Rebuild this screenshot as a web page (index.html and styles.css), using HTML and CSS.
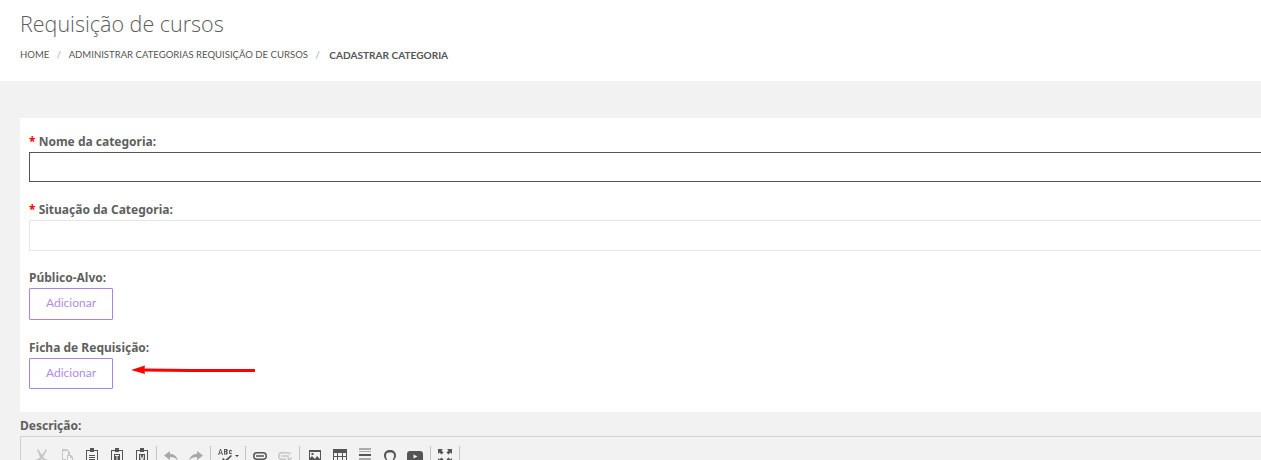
FILE: index.html
```html
<!DOCTYPE html>
<html lang="pt-BR">
<head>
    <meta charset="UTF-8">
    <title>Requisição de cursos</title>
    <link rel="stylesheet" href="styles.css">
</head>
<body>
    <div class="cabecalho">
        <h1 class="titulo">Requisição de cursos</h1>
        <div class="breadcrumb">
            <a>HOME</a><span class="sep">/</span>
            <a>ADMINISTRAR CATEGORIAS REQUISIÇÃO DE CURSOS</a><span class="sep">/</span>
            <strong>CADASTRAR CATEGORIA</strong>
        </div>
    </div>

    <div class="conteudo">
        <form class="painel">
            <div class="campo">
                <label><span class="obrigatorio">*</span> Nome da categoria:</label>
                <div class="input input-foco"></div>
            </div>
            <div class="campo campo-situacao">
                <label><span class="obrigatorio">*</span> Situação da Categoria:</label>
                <div class="input"></div>
            </div>
            <div class="campo">
                <label>Público-Alvo:</label>
                <button type="button" class="botao">Adicionar</button>
            </div>
            <div class="campo campo-seta">
                <label>Ficha de Requisição:</label>
                <button type="button" class="botao">Adicionar</button>
                <svg class="seta" width="126" height="12" viewBox="0 0 126 12">
                    <path d="M0 6 L14 1.500 L13.500 4.500 L60 5 L124 5 L124 8 L60 8 L13.500 7.500 L14 10 Z" fill="#f00"/>
                </svg>
            </div>
        </form>

        <div class="descricao">
            <label>Descrição:</label>
            <div class="editor">
                <div class="toolbar">
                    <div class="grupo">
                        <svg class="ico claro" viewBox="0 0 16 16"><path d="M4 1l4 6 4-6 1 1-4 7 2 2a2.500 2.500 0 1 1-2 2L8 10.500 6 13a2.500 2.500 0 1 1-2-2l2-2-3-7z"/></svg>
                        <svg class="ico claro" viewBox="0 0 16 16"><path d="M3 1h5l3 3v3H9V3H4v8h3v1H3zM8 7h4l2 2v6H8zM9 8v6h4V10h-2V8z"/></svg>
                        <svg class="ico" viewBox="0 0 16 16"><path d="M6 0h4v2h4v14H2V2h4zM3 3v12h10V3h-3v1H6V3zM5 7h6v1H5zM5 9h6v1H5zM5 11h6v1H5zM5 13h6v1H5z"/></svg>
                        <svg class="ico" viewBox="0 0 16 16"><path d="M6 0h4v2h4v14H2V2h4zM3 3v12h10V3h-3v1H6V3zM5 6h6v8H5zM6 7v1h1.500v5h1V8H10V7z"/></svg>
                        <svg class="ico" viewBox="0 0 16 16"><path d="M6 0h4v2h4v14H2V2h4zM3 3v12h10V3h-3v1H6V3zM5 6h6v8H5zM6 7l.7 6h1L8 10l.3 3h1l.7-6h-.8l-.4 3.500L8 8l-.8 2.500L6.800 7z"/></svg>
                    </div>
                    <div class="grupo">
                        <svg class="ico medio" viewBox="0 0 16 16"><path d="M7 3v3c4 0 7 2 8 7-2-3-4-4-8-4v3L1 7.500z"/></svg>
                        <svg class="ico medio" viewBox="0 0 16 16"><path d="M9 3v3c-4 0-7 2-8 7 2-3 4-4 8-4v3l6-4.500z"/></svg>
                    </div>
                    <div class="grupo grupo-abc">
                        <svg class="ico" viewBox="0 0 16 16"><path d="M1 7l2-6h1l2 6H5l-.4-1.500H2.400L2 7zM2.700 4.500h1.600L3.500 2zM7 1h2.500c1.500 0 1.500 2 .5 2.500 1.200.5 1 3-.5 3H7zM8 2v1h1V2zM8 4v1.500h1.200V4zM15 2.500l-.5 1C13.500 2.500 13 3 13 4s.5 1.500 1.500.5l.5 1c-2 1.500-3 .5-3-1.500s1.200-3 3-1.500zM5 11l1.500-1 1.500 2 6-5 1 1-7 7z"/></svg>
                        <span class="caret"></span>
                    </div>
                    <div class="grupo">
                        <svg class="ico" viewBox="0 0 16 16"><path d="M5 4h6a4 4 0 0 1 0 8H5a4 4 0 0 1 0-8zm0 1.500a2.500 2.500 0 0 0 0 5h6a2.500 2.500 0 0 0 0-5zM4 7.200h8v1.600H4z"/></svg>
                        <svg class="ico claro" viewBox="0 0 16 16"><path d="M5 4h6a4 4 0 0 1 3 1.500L13 7a2.500 2.500 0 0 0-2-1.500H5a2.500 2.500 0 0 0 0 5h4V12H5a4 4 0 0 1 0-8zM4 7.200h8v1.600H4zM10 10l1-1 1.500 1.500L14 9l1 1-1.500 1.500L15 13l-1 1-1.500-1.500L11 14l-1-1 1.500-1.500z"/></svg>
                    </div>
                    <div class="grupo grupo-midia">
                        <svg class="ico" viewBox="0 0 16 16"><path d="M2 2h12v12H2zM3 4v6l2-2 3 3 2-3 3 3V4zM4.500 5h2v2h-2z"/></svg>
                        <svg class="ico" viewBox="0 0 16 16"><path d="M1 1h14v14H1zM2 5v3h3V5zM6 5v3h4V5zM11 5v3h3V5zM2 9v5h3V9zM6 9v5h4V9zM11 9v5h3V9z"/></svg>
                        <svg class="ico" viewBox="0 0 16 16"><path d="M2 0h12v2H2z" opacity=".45"/><path d="M2 3h12v1H2z" opacity=".45"/><path d="M2 6h12v2H2z"/><path d="M2 10h12v2H2z" opacity=".45"/><path d="M2 13h12v1H2z" opacity=".45"/></svg>
                        <svg class="ico" viewBox="0 0 16 16"><path d="M8 2c3.500 0 6 2 6 5.500 0 2-1 3.500-2.500 5H14V15H9.500v-2c1.500-1 2.500-3 2.500-5.500S10.500 4.500 8 4.500 4 5 4 7.500 5 12 6.500 13v2H2v-2.500h2.500C3 11 2 9.500 2 7.500 2 4 4.500 2 8 2z"/></svg>
                        <svg class="ico" viewBox="0 0 16 16"><path d="M3 3h10a3 3 0 0 1 3 3v5a3 3 0 0 1-3 3H3a3 3 0 0 1-3-3V6a3 3 0 0 1 3-3zM6.500 6.500v4L10.500 8.500z"/></svg>
                    </div>
                    <div class="grupo">
                        <svg class="ico" viewBox="0 0 16 16"><path d="M1 1h5L4.500 2.500l2 2-2 2-2-2L1 6zM15 1v5l-1.500-1.500-2 2-2-2 2-2L10 1zM1 15v-5l1.500 1.500 2-2 2 2-2 2L6 15zM15 15h-5l1.500-1.500-2-2 2-2 2 2L15 10z"/></svg>
                    </div>
                </div>
            </div>
        </div>
    </div>
</body>
</html>
```

FILE: styles.css
```css
* {
    margin: 0;
    padding: 0;
    box-sizing: border-box;
}

html, body {
    width: 100%;
    height: 100%;
    overflow: hidden;
    background-color: #f2f2f2;
    font-family: "Noto Sans", sans-serif;
    color: #5f5f5f;
}

.cabecalho {
    height: 81px;
    background-color: white;
    padding: 10px 20px 0;
}

.titulo {
    font-family: "Open Sans", sans-serif;
    font-size: 21.5px;
    font-weight: 300;
    line-height: 28px;
    color: #5c5c5c;
}

.breadcrumb {
    margin-top: 10px;
    font-family: Lato, sans-serif;
    font-size: 9.55px;
    line-height: 14px;
    color: #555;
    display: flex;
    white-space: nowrap;
}

.breadcrumb strong {
    margin-left: 2px;
    font-size: 10.1px;
    font-weight: 700;
}

.sep {
    color: #aaa;
    margin: 0 7.5px;
}

.conteudo {
    padding: 37px 0 0 20px;
}

.painel {
    background-color: white;
    margin-right: -20px;
    height: 294px;
    padding: 14px 0 0 9px;
}

.campo {
    margin-bottom: 18px;
}

.campo-situacao {
    margin-bottom: 17px;
}

.campo label,
.descricao label {
    display: block;
    font-size: 12px;
    font-weight: 700;
    line-height: 20px;
}

.obrigatorio {
    color: #f00;
}

.input {
    height: 31px;
    border: 1px solid #e6e6e6;
    background-color: white;
}

.input-foco {
    height: 30px;
    border-color: #555;
}

.botao {
    display: block;
    width: 84px;
    height: 32px;
    padding-bottom: 3px;
    background-color: white;
    border: 1px solid #a983e3;
    border-radius: 1px;
    font-family: Lato, sans-serif;
    font-size: 12px;
    color: #ae8de6;
}

.campo-seta {
    position: relative;
}

.campo-seta .botao {
    height: 31px;
}

.seta {
    position: absolute;
    left: 102px;
    top: 26px;
}

.descricao {
    margin-top: 4px;
}

.editor {
    height: 40px;
    border: 1px solid #d1d1d1;
    border-right: none;
}

.toolbar {
    display: flex;
    align-items: center;
    padding: 9px 0 0 13px;
}

.grupo {
    display: flex;
    align-items: center;
    gap: 9px;
    padding: 0 6px 0 0;
    margin-right: 6px;
    height: 20px;
    border-right: 1px solid #c4c4c4;
}

.grupo-abc {
    gap: 2px;
}

.grupo-midia {
    margin-left: 1px;
    padding-right: 7px;
}

.ico {
    width: 16px;
    height: 16px;
    fill: #555;
}

.ico.claro {
    fill: #c6c6c6;
}

.ico.medio {
    fill: #a8a8a8;
}

.caret {
    border-left: 2px solid transparent;
    border-right: 2px solid transparent;
    border-top: 2px solid #444;
}
```
